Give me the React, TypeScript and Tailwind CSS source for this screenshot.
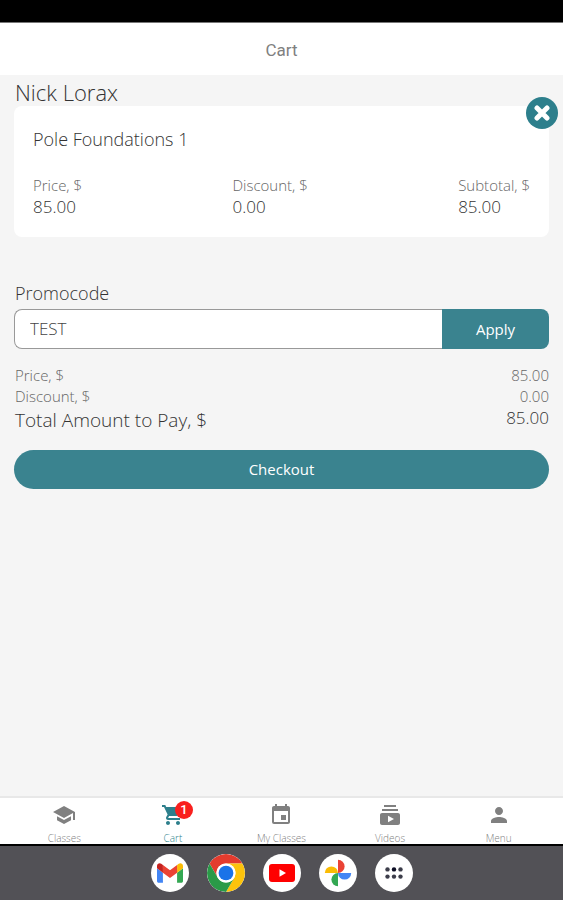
import { useState } from 'react';
import type { ReactNode } from 'react';
import { MdSchool, MdShoppingCart, MdEvent, MdSubscriptions, MdPerson } from 'react-icons/md';

interface Amount {
  label: string;
  value: string;
}

const itemAmounts: Amount[] = [
  { label: 'Price, $', value: '85.00' },
  { label: 'Discount, $', value: '0.00' },
  { label: 'Subtotal, $', value: '85.00' },
];

const tabs = [
  { label: 'Classes', icon: MdSchool },
  { label: 'Cart', icon: MdShoppingCart, badge: 1 },
  { label: 'My Classes', icon: MdEvent },
  { label: 'Videos', icon: MdSubscriptions },
  { label: 'Menu', icon: MdPerson },
];

function GmailIcon() {
  return (
    <svg viewBox="52 42 88 66" className="w-[26px] h-5" aria-hidden="true">
      <path fill="#4285f4" d="M58 108h14V74L52 59v43c0 3.32 2.69 6 6 6" />
      <path fill="#34a853" d="M120 108h14c3.32 0 6-2.69 6-6V59l-20 15" />
      <path fill="#fbbc04" d="M120 48v26l20-15v-8c0-7.42-8.47-11.65-14.4-7.2" />
      <path fill="#ea4335" d="M72 74V48l24 18 24-18v26L96 92" />
      <path fill="#c5221f" d="M52 51v8l20 15V48l-5.6-4.2c-5.94-4.45-14.4-.22-14.4 7.2" />
    </svg>
  );
}

function ChromeIcon() {
  return (
    <svg viewBox="0 0 48 48" className="w-full h-full" aria-hidden="true">
      <path fill="#e33b2e" d="M3.22 12A24 24 0 0 1 44.78 12H24A12 12 0 0 0 13.6 30Z" />
      <path fill="#fcc30c" d="M44.78 12A24 24 0 0 1 24 48L34.39 30A12 12 0 0 0 24 12Z" />
      <path fill="#2a9a48" d="M24 48A24 24 0 0 1 3.22 12L13.6 30A12 12 0 0 0 34.39 30Z" />
      <circle cx="24" cy="24" r="12" fill="#fff" />
      <circle cx="24" cy="24" r="9.3" fill="#1a73e8" />
    </svg>
  );
}

function YoutubeIcon() {
  return (
    <svg viewBox="0 0 26 18" className="w-[26px] h-[18px]" aria-hidden="true">
      <rect width="26" height="18" rx="3" fill="#f00" />
      <path fill="#fff" d="M10.5 5.2v7.6L17 9z" />
    </svg>
  );
}

function PhotosIcon() {
  return (
    <svg viewBox="0 0 28 28" className="w-7 h-7" aria-hidden="true">
      <path fill="#ea4335" d="M14 .8a6.6 6.6 0 0 1 0 13.2z" />
      <path fill="#fbbc04" d="M.8 14a6.6 6.6 0 0 1 13.2 0z" />
      <path fill="#34a853" d="M14 27.2A6.6 6.6 0 0 1 14 14z" />
      <path fill="#4285f4" d="M27.2 14A6.6 6.6 0 0 1 14 14z" />
    </svg>
  );
}

function AppsIcon() {
  return (
    <svg viewBox="0 0 20 14" className="w-5 h-[14px]" fill="#3c3d4a" aria-hidden="true">
      <circle cx="3.5" cy="3.4" r="2.2" />
      <circle cx="10" cy="3.4" r="2.2" fill="#0d0e24" />
      <circle cx="16.5" cy="3.4" r="2.2" />
      <circle cx="3.5" cy="10.6" r="2.2" />
      <circle cx="10" cy="10.6" r="2.2" />
      <circle cx="16.5" cy="10.6" r="2.2" />
    </svg>
  );
}

const dock: { name: string; icon: ReactNode }[] = [
  { name: 'Gmail', icon: <GmailIcon /> },
  { name: 'Chrome', icon: <ChromeIcon /> },
  { name: 'YouTube', icon: <YoutubeIcon /> },
  { name: 'Photos', icon: <PhotosIcon /> },
  { name: 'All apps', icon: <AppsIcon /> },
];

export default function App() {
  const [promocode, setPromocode] = useState('TEST');
  const [activeTab, setActiveTab] = useState('Cart');

  return (
    <div className="min-h-screen flex flex-col bg-[#f5f5f5] text-[#333] font-['Open_Sans','Noto_Sans',sans-serif]">
      {/* Status bar */}
      <div className="h-[23px] shrink-0 bg-black border-b border-[#777]" />

      <header className="h-[52px] shrink-0 flex items-center justify-center bg-white pt-[2px]">
        <h1 className="font-[Roboto,sans-serif] text-[17px] leading-6 text-[#808080]">Cart</h1>
      </header>

      <main className="flex-1 px-[14px] pt-1">
        <h2 className="px-px text-[22px] leading-[26px] mb-px font-light">Nick Lorax</h2>

        {/* Cart item */}
        <section className="relative h-[131px] bg-white rounded-lg px-[19px] pt-[19px]">
          <h3 className="text-lg leading-7 font-light">Pole Foundations 1</h3>
          <dl className="flex justify-between mt-[21px]">
            {itemAmounts.map((amount) => (
              <div key={amount.label}>
                <dt className="text-[15px] leading-[22px] font-light text-[#666]">{amount.label}</dt>
                <dd className="text-[17px] leading-[22px] font-light">{amount.value}</dd>
              </div>
            ))}
          </dl>
          <button
            type="button"
            aria-label="Remove item"
            className="absolute -top-[9px] -right-[9px] w-8 h-8 rounded-full bg-[#2d7f8c] flex items-center justify-center"
          >
            <svg viewBox="0 0 16 16" className="w-4 h-4" stroke="#fff" strokeWidth="5" strokeLinecap="round" aria-hidden="true">
              <path d="M3 3l10 10M13 3L3 13" />
            </svg>
          </button>
        </section>

        {/* Promocode */}
        <form className="mt-[42px]" onSubmit={(e) => e.preventDefault()}>
          <label htmlFor="promocode" className="block px-px mb-[2px] text-lg leading-7 font-light">
            Promocode
          </label>
          <div className="flex h-10">
            <input
              id="promocode"
              value={promocode}
              onChange={(e) => setPromocode(e.target.value)}
              className="flex-1 min-w-0 px-[15px] bg-white border border-r-0 border-[#999] rounded-l-lg text-[17px] font-light text-[#444] outline-none"
            />
            <button type="submit" className="w-[107px] rounded-r-lg bg-[#3a838f] text-[15px] text-white">
              Apply
            </button>
          </div>
        </form>

        {/* Totals */}
        <dl className="mt-4 pl-px">
          <div className="flex justify-between text-[15px] leading-[21px] font-light text-[#666]">
            <dt>Price, $</dt>
            <dd>85.00</dd>
          </div>
          <div className="flex justify-between text-[15px] leading-[21px] font-light text-[#666]">
            <dt>Discount, $</dt>
            <dd>0.00</dd>
          </div>
          <div className="flex justify-between font-light">
            <dt className="text-[19px] leading-[26px]">Total Amount to Pay, $</dt>
            <dd className="text-[17px] leading-[22px]">85.00</dd>
          </div>
        </dl>

        <button type="button" className="block w-full h-[39px] mt-[17px] rounded-full bg-[#3a838f] text-[15px] text-white">
          Checkout
        </button>
      </main>

      {/* Tabs */}
      <nav className="h-12 shrink-0 flex px-[10px] bg-white border-t-2 border-[#e8e8e8]">
        {tabs.map(({ label, icon: Icon, badge }) => (
          <button
            key={label}
            type="button"
            onClick={() => setActiveTab(label)}
            className={`flex-1 basis-0 flex flex-col items-center pt-[5px] ${label === activeTab ? 'text-[#2d7f8c]' : 'text-[#808080]'}`}
          >
            <span className="relative">
              <Icon size={24} />
              {badge && (
                <span className="absolute -top-[2px] -right-2 w-[18px] h-[18px] rounded-full bg-[#f9201e] text-white font-[Roboto,sans-serif] text-[13px] leading-[18px] font-medium text-center">
                  {badge}
                </span>
              )}
            </span>
            <span className="mt-[5px] text-[10px] leading-3 font-light">{label}</span>
          </button>
        ))}
      </nav>

      {/* System dock */}
      <div className="h-14 shrink-0 flex items-center justify-center gap-[18px] bg-[#525156] border-t-2 border-black">
        {dock.map(({ name, icon }) => (
          <button
            key={name}
            type="button"
            aria-label={name}
            className="w-[38px] h-[38px] rounded-full bg-white flex items-center justify-center overflow-hidden"
          >
            {icon}
          </button>
        ))}
      </div>
    </div>
  );
}
